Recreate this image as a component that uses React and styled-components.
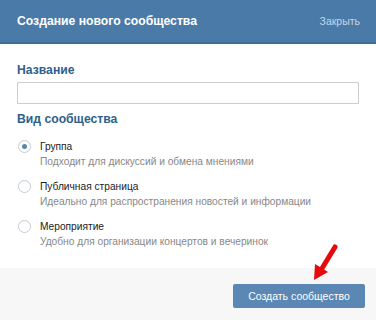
import React, { useState } from "react";
import styled, { createGlobalStyle } from "styled-components";

const Global = createGlobalStyle`
  html, body { margin: 0; padding: 0; background: #fff; }
  body { font-family: "Liberation Sans", Arial, sans-serif; }
`;

const Modal = styled.div`
  width: 376px;
  height: 320px;
  display: flex;
  flex-direction: column;
  background: #fff;
  position: relative;
  overflow: hidden;
`;

const Header = styled.div`
  height: 42px;
  flex: none;
  background: #4a7aa8;
  border-bottom: 2px solid #3f6b94;
  display: flex;
  align-items: center;
  justify-content: space-between;
  padding: 0 16px 0 17px;
`;

const Title = styled.div`
  color: #fff;
  font-weight: bold;
  font-size: 12.2px;
`;

const Close = styled.a`
  color: #c4d6e9;
  font-size: 10.5px;
`;

const Body = styled.div`
  flex: 1;
  padding: 19px 17px 0 17px;
  display: flex;
  flex-direction: column;
`;

const Label = styled.div`
  color: #2f5f8b;
  font-weight: bold;
  font-size: 12.2px;
  line-height: 15px;
  margin-bottom: ${(p) => p.$mb || 0}px;
`;

const Input = styled.input`
  box-sizing: border-box;
  width: 342px;
  height: 22px;
  border: 1px solid #cccccc;
  border-radius: 1px;
  outline: none;
  margin: 0 0 8px 0;
  padding: 0 4px;
`;

const Options = styled.div`
  display: flex;
  flex-direction: column;
  gap: 12px;
  margin-top: 13px;
`;

const Option = styled.label`
  display: grid;
  grid-template-columns: 22px 1fr;
  row-gap: 2px;
  align-items: center;
  padding-left: 1px;
  cursor: pointer;
`;

const Radio = styled.span`
  box-sizing: border-box;
  width: 13px;
  height: 13px;
  border-radius: 50%;
  border: 1px solid #c5cbd2;
  background: #fff;
  display: flex;
  align-items: center;
  justify-content: center;
  &::after {
    content: "";
    width: 5px;
    height: 5px;
    border-radius: 50%;
    background: ${(p) => (p.$on ? "#5b85ae" : "transparent")};
  }
`;

const OptTitle = styled.span`
  font-size: 10.2px;
  line-height: 13px;
  color: #222;
`;

const OptDesc = styled.span`
  grid-column: 2;
  font-size: 10.2px;
  line-height: 13px;
  color: #888;
`;

const Footer = styled.div`
  height: 52px;
  flex: none;
  background: #f7f7f7;
  display: flex;
  align-items: center;
  justify-content: flex-end;
  padding: 0 11px 0 0;
`;

const Button = styled.button`
  width: 132px;
  height: 24px;
  border: none;
  border-radius: 2px;
  background: #5a87b3;
  color: #fff;
  font-family: "Liberation Sans", Arial, sans-serif;
  font-size: 10.5px;
  margin-top: 4px;
`;

const Arrow = styled.svg`
  position: absolute;
  left: 308px;
  top: 244px;
`;

const options = [
  ["Группа", "Подходит для дискуссий и обмена мнениями"],
  ["Публичная страница", "Идеально для распространения новостей и информации"],
  ["Мероприятие", "Удобно для организации концертов и вечеринок"],
];

export default function App() {
  const [sel, setSel] = useState(0);
  return (
    <Modal>
      <Global />
      <Header>
        <Title>Создание нового сообщества</Title>
        <Close>Закрыть</Close>
      </Header>
      <Body>
        <Label $mb={4}>Название</Label>
        <Input />
        <Label>Вид сообщества</Label>
        <Options>
          {options.map(([t, d], i) => (
            <Option key={t} onClick={() => setSel(i)}>
              <Radio $on={sel === i} />
              <OptTitle>{t}</OptTitle>
              <OptDesc>{d}</OptDesc>
            </Option>
          ))}
        </Options>
      </Body>
      <Footer>
        <Button>Создать сообщество</Button>
      </Footer>
      <Arrow width="34" height="40" viewBox="0 0 34 40">
        <path d="M27 3 L13 26" stroke="#e30b0b" strokeWidth="5" strokeLinecap="round" />
        <polygon points="6,36 7,20 20,28" fill="#e30b0b" />
      </Arrow>
    </Modal>
  );
}
